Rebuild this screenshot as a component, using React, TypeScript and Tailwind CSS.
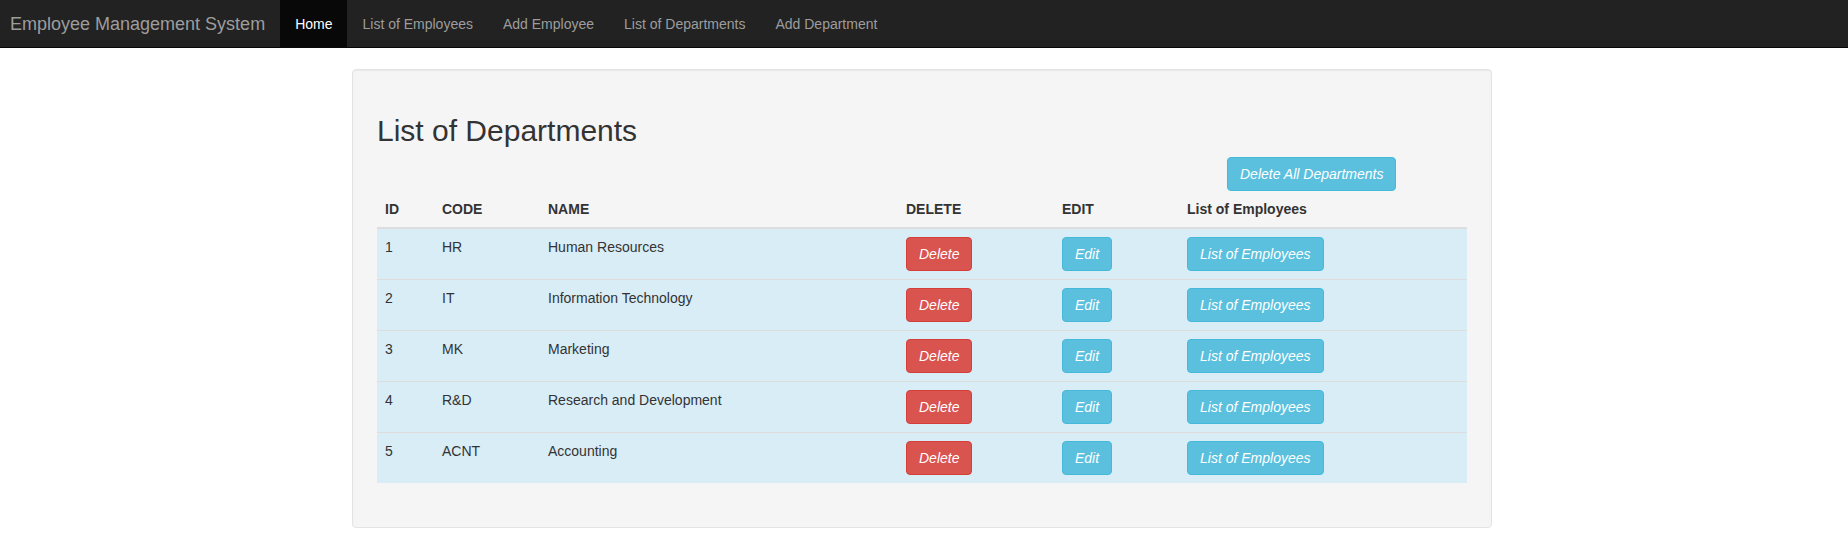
import React from 'react';

type Department = { id: number; code: string; name: string };

const DEPARTMENTS: Department[] = [
  { id: 1, code: 'HR', name: 'Human Resources' },
  { id: 2, code: 'IT', name: 'Information Technology' },
  { id: 3, code: 'MK', name: 'Marketing' },
  { id: 4, code: 'R&D', name: 'Research and Development' },
  { id: 5, code: 'ACNT', name: 'Accounting' },
];

const NAV_LINKS = ['List of Employees', 'Add Employee', 'List of Departments', 'Add Department'];

function Navbar() {
  return (
    <nav className="flex h-[48px] items-stretch border-b border-[#080808] bg-[#222222]">
      <a href="#" className="flex items-center pl-[10px] pr-[15px] text-[18px] leading-[20px] text-[#9d9d9d]">
        Employee Management System
      </a>
      <ul className="flex items-stretch">
        <li className="flex items-center bg-[#080808] px-[15px] text-[14px] leading-[20px] text-white">
          <a href="#">Home</a>
        </li>
        {NAV_LINKS.map(link => (
          <li key={link} className="flex items-center px-[15px] text-[14px] leading-[20px] text-[#9d9d9d]">
            <a href="#">{link}</a>
          </li>
        ))}
      </ul>
    </nav>
  );
}

function Btn({ tone, children }: { tone: 'danger' | 'info'; children: React.ReactNode }) {
  const colors =
    tone === 'danger'
      ? 'bg-[#d9534f] border-[#d43f3a]'
      : 'bg-[#5bc0de] border-[#46b8da]';
  return (
    <button
      className={`inline-block rounded-[4px] border px-[12px] py-[6px] text-[14px] leading-[20px] italic text-white ${colors}`}
    >
      {children}
    </button>
  );
}

export default function App() {
  return (
    <div className="min-h-screen bg-white font-['Liberation_Sans',Arial,sans-serif] text-[14px] leading-[20px] text-[#333333]">
      <Navbar />

      <div className="ml-[352px] mt-[21px] w-[1140px] rounded-[4px] border border-[#e3e3e3] bg-[#f5f5f5] p-[24px] shadow-[inset_0_1px_1px_rgba(0,0,0,0.05)]">
        <h2 className="mb-[10px] mt-[20px] text-[30px] font-medium leading-[33px]">List of Departments</h2>

        <div className="ml-[850px]">
          <Btn tone="info">Delete All Departments</Btn>
        </div>

        <table className="mb-[20px] w-[1090px] table-fixed border-collapse">
          <colgroup>
            <col className="w-[57px]" />
            <col className="w-[106px]" />
            <col className="w-[358px]" />
            <col className="w-[156px]" />
            <col className="w-[125px]" />
            <col className="w-[288px]" />
          </colgroup>
          <thead>
            <tr>
              <th className="border-b-2 border-[#dddddd] p-[8px] text-left font-bold">ID</th>
              <th className="border-b-2 border-[#dddddd] p-[8px] text-left font-bold">CODE</th>
              <th className="border-b-2 border-[#dddddd] p-[8px] text-left font-bold">NAME</th>
              <th className="border-b-2 border-[#dddddd] p-[8px] text-left font-bold">DELETE</th>
              <th className="border-b-2 border-[#dddddd] p-[8px] text-left font-bold">EDIT</th>
              <th className="border-b-2 border-[#dddddd] p-[8px] text-left font-bold">List of Employees</th>
            </tr>
          </thead>
          <tbody>
            {DEPARTMENTS.map(dept => (
              <tr key={dept.id} className="bg-[#d9edf7]">
                <td className="border-t border-[#dddddd] p-[8px] align-top">{dept.id}</td>
                <td className="border-t border-[#dddddd] p-[8px] align-top">{dept.code}</td>
                <td className="border-t border-[#dddddd] p-[8px] align-top">{dept.name}</td>
                <td className="border-t border-[#dddddd] p-[8px] align-top">
                  <Btn tone="danger">Delete</Btn>
                </td>
                <td className="border-t border-[#dddddd] p-[8px] align-top">
                  <Btn tone="info">Edit</Btn>
                </td>
                <td className="border-t border-[#dddddd] p-[8px] align-top">
                  <Btn tone="info">List of Employees</Btn>
                </td>
              </tr>
            ))}
          </tbody>
        </table>
      </div>
    </div>
  );
}
